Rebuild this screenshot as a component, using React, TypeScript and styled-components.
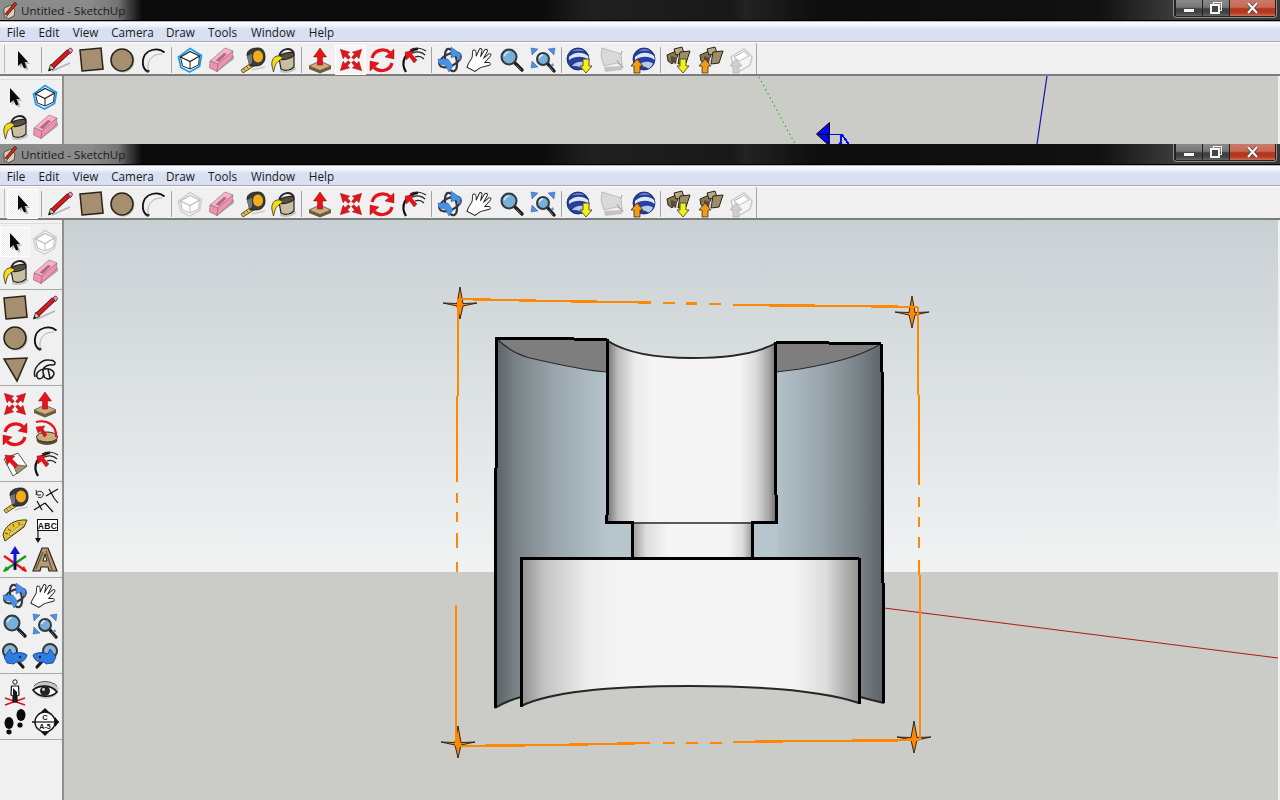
import React from "react";
import styled, { createGlobalStyle } from "styled-components";

const Global = createGlobalStyle`
  html, body { margin: 0; padding: 0; background: #f0f0f0; overflow: hidden; }
  body { font-family: "Open Sans", "Noto Sans", "Liberation Sans", sans-serif; }
`;

const Page = styled.div`
  width: 1280px;
  height: 800px;
  display: flex;
  flex-direction: column;
  overflow: hidden;
`;
const Win = styled.div<{ $h: number }>`
  height: ${(p) => p.$h}px;
  display: flex;
  flex-direction: column;
  overflow: hidden;
  flex: none;
`;
const TitleBar = styled.div`
  height: 20px;
  flex: none;
  display: flex;
  align-items: flex-start;
  border-bottom: 1px solid #000;
  box-shadow: 0 1px 0 #b8b8b8;
  margin-bottom: 1px;
  background:
    linear-gradient(90deg, #8c8c8c 0, #8a8a8a 90px, #747474 118px, #3a3a3a 130px, rgba(20,20,20,0) 142px),
    linear-gradient(90deg, #0b0b0b 0, #0b0b0b 540px, #202020 590px, #181818 730px, #222 745px, #0d0d0d 820px, #111 1100px, #3a3a3a 1172px, #3a3a3a 1280px);
`;
const AppGlyph = styled.svg`
  width: 16px;
  height: 18px;
  margin: 2px 3px 0 2px;
  flex: none;
`;
const TitleText = styled.span`
  font-size: 11.6px;
  line-height: 21px;
  color: #1c1c1c;
  white-space: nowrap;
  flex: 1;
`;
const WinButtons = styled.div`
  display: flex;
  width: 104px;
  height: 18px;
  margin-right: 3px;
  padding: 0 1px 1px 2px;
  box-sizing: border-box;
  gap: 1px;
  border: 1px solid #8d8d8d;
  border-top: 0;
  border-radius: 0 0 4px 4px;
  background: #222;
`;
const WinBtn = styled.div<{ $w: number; $close?: boolean }>`
  width: ${(p) => p.$w}px;
  height: 100%;
  display: flex;
  align-items: center;
  justify-content: center;
  background: ${(p) =>
    p.$close
      ? "linear-gradient(#c87a68 0, #c9695a 45%, #b83417 55%, #b33a20 80%, #d0705a 100%)"
      : "linear-gradient(#8a8a8a 0, #777 45%, #3f3f3f 55%, #444 80%, #666 100%)"};
`;
const MinGlyph = styled.div`
  width: 10px;
  height: 3px;
  margin-top: 4px;
  background: #f4f4f4;
  box-shadow: 0 0 1px #222;
`;
const MenuBar = styled.div`
  height: 20px;
  flex: none;
  box-sizing: border-box;
  display: flex;
  padding-right: 2px;
  border-bottom: 1px solid #a4a8b2;
  background: linear-gradient(#fafbfd 0, #eff2f8 4px, #d9e0f2 7px, #d9e0f2 100%);
`;
const MenuItem = styled.span<{ $w: number }>`
  width: ${(p) => p.$w}px;
  font-size: 11.7px;
  line-height: 20px;
  color: #1a1a1a;
  text-align: center;
  flex: none;
`;
const Toolbar = styled.div`
  height: 32px;
  flex: none;
  display: flex;
  align-items: flex-start;
  box-sizing: border-box;
  padding-top: 2px;
  background: #f0f0f0;
  border-top: 1px solid #fff;
  position: relative;
`;
const Grip = styled.div`
  width: 5px;
  box-sizing: border-box;
  height: 28px;
  margin: 0 2px 0 0;
  border-right: 1px solid #bcbcbc;
  flex: none;
`;
const ToolBtn = styled.div<{ $active?: boolean }>`
  width: 31px;
  height: 30px;
  margin-top: 0;
  display: flex;
  align-items: center;
  justify-content: center;
  box-sizing: border-box;
  flex: none;
  ${(p) =>
    p.$active
      ? `border: 1px solid #fff;
         background: repeating-conic-gradient(#ffffff 0 25%, #ececec 0 50%) 0 0 / 2px 2px;`
      : ""}
`;
const Sep = styled.div`
  width: 6px;
  flex: none;
  height: 30px;
  display: flex;
  justify-content: center;
  &::after {
    content: "";
    width: 1px;
    height: 26px;
    margin-top: 2px;
    background: #a2a2a2;
  }
`;
const EndRule = styled.div`
  width: 1px;
  height: 31px;
  margin: -2px 0 0 0;
  background: #a2a2a2;
  flex: none;
`;
const Content = styled.div`
  flex: 1;
  min-height: 0;
  display: flex;
  border-top: 2px solid #7c7c7c;
  background: #f0f0f0;
`;
const Palette = styled.div<{ $pad: number }>`
  flex: none;
  box-sizing: border-box;
  border-right: 2px solid #8f8f8f;
  width: 64px;
  padding-top: ${(p) => p.$pad}px;
  position: relative;
  &::before {
    content: "";
    position: absolute;
    left: 0;
    right: 0;
    top: 2px;
    height: 2px;
    background: linear-gradient(#fff, #d0d0d0);
  }
`;
const PalGrid = styled.div`
  display: grid;
  grid-template-columns: 30px 30px;
  grid-auto-rows: 30px;
`;
const PalBtn = styled.div<{ $active?: boolean }>`
  display: flex;
  align-items: center;
  justify-content: center;
  box-sizing: border-box;
  ${(p) =>
    p.$active
      ? `border: 1px solid #fff;
         background: repeating-conic-gradient(#ffffff 0 25%, #ececec 0 50%) 0 0 / 2px 2px;`
      : ""}
`;
const PalSep = styled.div`
  height: 6px;
  display: flex;
  align-items: flex-start;
  padding-top: 2px;
  box-sizing: border-box;
  &::after {
    content: "";
    width: 100%;
    height: 1px;
    background: #a8a8a8;
  }
`;
const Canvas = styled.div`
  flex: 1;
  min-width: 0;
  margin-right: 2px;
  & > svg {
    display: block;
    width: 100%;
    height: 100%;
  }
`;

const OL = "#2a2418";
const TAN = "#a68f70";
const RED = "#e5141c";
const BLUE = "#4a90e6";

const Mag = ({ cx = 11, cy = 11, r = 7.5, ex = 24, ey = 24 }: { cx?: number; cy?: number; r?: number; ex?: number; ey?: number }) => (
  <>
    <line x1={cx + r * 0.7} y1={cy + r * 0.7} x2={ex} y2={ey} stroke="#1c1c1c" strokeWidth="3.4" strokeLinecap="round" />
    <line x1={cx + r * 0.7 + 2} y1={cy + r * 0.7 + 3} x2={ex - 1} y2={ey} stroke="#aaa" strokeWidth=".6" />
    <circle cx={cx} cy={cy} r={r} fill="#79aed6" stroke="#2e3a42" strokeWidth="2" />
    <path d={`M${cx - r * 0.6} ${cy - 1} A${r * 0.65} ${r * 0.65} 0 0 1 ${cx} ${cy - r * 0.65}`} stroke="#d6ecfa" strokeWidth="1.5" fill="none" />
  </>
);
const Globe = () => (
  <>
    <circle cx="12" cy="13" r="11" fill="#23409e" stroke="#14214f" strokeWidth=".8" />
    <path d="M3 11 C8 6 16 5 22 10 C22.6 11.4 22.8 12.6 22.6 14 C17 9.5 9 10 3 14 Z" fill="#dfe7f6" />
    <path d="M6 20 C10 15 17 15 21 17.5 C20 20 18.5 21.5 16.5 22.5 C13 20 9 20 6 20Z" fill="#b9c8ea" />
    <path d="M6 5 C10 2.5 15 2.5 18.5 5 C14 4.5 10 4.6 6 5Z" fill="#6f8fd8" />
  </>
);
const Boxes = () => (
  <>
    <path d="M2 9 L11 5 L13 10 L7 18 L3 15Z" fill="#8a7656" stroke="#2a2418" strokeWidth="1" />
    <path d="M9 3 L17 1 L19 7 L11 9Z" fill="#bba888" stroke="#2a2418" strokeWidth="1" />
    <path d="M15 6 L25 5 L21 17 L13 18Z" fill="#a08c6a" stroke="#2a2418" strokeWidth="1" />
    <path d="M6 10 L12 12 L11 18 L6 16Z" fill="#5b4c36" />
  </>
);
const Arrow = ({ x, up, fill }: { x: number; up?: boolean; fill: string }) => (
  <path
    d={
      up
        ? `M${x} 13 L${x + 6} 20 L${x + 3} 20 L${x + 3} 27 L${x - 3} 27 L${x - 3} 20 L${x - 6} 20Z`
        : `M${x} 27 L${x + 6} 20 L${x + 3} 20 L${x + 3} 13 L${x - 3} 13 L${x - 3} 20 L${x - 6} 20Z`
    }
    fill={fill}
    stroke="#333"
    strokeWidth=".8"
  />
);
const Box3 = ({ c, inner }: { c: string; inner: string }) => (
  <>
    <path d="M14 2.5 L25.5 9.5 L23.5 20.5 L13.5 26 L5 21.5 L2.5 11Z" fill="#fff" stroke={c} strokeWidth="1.8" />
    <path d="M4.5 11 L14 5.5 L23.5 10 L14 15.5Z" fill="#fff" stroke={inner} strokeWidth="1.2" />
    <path d="M14 15.5 L14 23 M4.5 11 L6.5 20 L14 23 L22.5 19 L23.5 10" fill="none" stroke={inner} strokeWidth="1" />
  </>
);
const Pal4 = ({ a = 45 }: { a?: number }) => (
  <g transform={`rotate(${a} 14 14)`}>
    <path d="M14 -1 L18.6 7.5 L15.6 7.2 L15.4 11.6 L12.6 11.6 L12.4 7.2 L9.4 7.5Z" fill={RED} stroke="#8a0a0a" strokeWidth=".5" />
  </g>
);
const Zoomer = ({ flip }: { flip?: boolean }) => (
  <g transform={flip ? "matrix(-1 0 0 1 28 0)" : undefined}>
    <line x1="13" y1="15" x2="22" y2="25" stroke="#1c1c1c" strokeWidth="3.2" strokeLinecap="round" />
    <circle cx="9" cy="9" r="7" fill="#8fb6d4" stroke="#2e3a42" strokeWidth="2" />
    <path d="M3 15 L9 7 L11 12 C16 10 22 10 26 13 C25 18 21 21 15 20 L13 22 L6 21Z" fill="#2f7de0" stroke="#123a80" strokeWidth=".8" />
    <circle cx="19" cy="15" r="1.2" fill="#123" />
  </g>
);

const ICONS: Record<string, React.ReactNode> = {
  select: (
    <>
      <path d="M11 7 L11 22 L14.5 19 L17 24.5 L19.5 23.5 L17.5 18 L21 18Z" fill="#bbb" />
      <path d="M9 5 L9 20 L12.5 17 L15 22.5 L17.5 21.5 L15.5 16 L19 16Z" fill="#0a0a0a" />
    </>
  ),
  pencil: (
    <>
      <path d="M6 25 L24 17" stroke="#b5b5b5" strokeWidth="1.5" />
      <path d="M6 21 L23 5" stroke="#222" strokeWidth="5" />
      <path d="M6 21 L23 5" stroke={RED} strokeWidth="3.4" />
      <path d="M2.5 25 L4.5 18.5 L8.5 22.5Z" fill="#d9c08a" stroke="#222" strokeWidth=".8" />
      <path d="M2.5 25 L3.4 22 L5.5 24Z" fill="#111" />
      <path d="M22 4 L24 2 C26 2 27 4 26 6 L24.5 7.5Z" fill="#f28ab0" stroke="#222" strokeWidth=".7" />
    </>
  ),
  rect: (
    <>
      <path d="M6 26 L27 24 L27 20 L6 22Z" fill="#c4c4c4" />
      <path d="M3 4 L24 2 L26 23 L5 25Z" fill={TAN} stroke={OL} strokeWidth="1.5" />
    </>
  ),
  circle: (
    <>
      <circle cx="15" cy="15" r="11.5" fill="#bdbdbd" />
      <circle cx="14" cy="14" r="11" fill={TAN} stroke={OL} strokeWidth="1.5" />
    </>
  ),
  arc: (
    <>
      <path d="M9 23 C8 13 14 8 23 8" stroke="#b0b0b0" strokeWidth="1" fill="none" />
      <path d="M9 26 C2 22 1 8 13 4 C18 2.5 22 3.5 25.5 6.5" stroke="#111" strokeWidth="1.8" fill="none" />
      <circle cx="9" cy="25" r="1.6" fill="#333" />
    </>
  ),
  comp: <Box3 c="#1c9cf0" inner="#222" />,
  compOff: <Box3 c="#d2d2d2" inner="#bcbcbc" />,
  eraser: (
    <>
      <path d="M10 26 L27 13 L27 9 L8 23Z" fill="#aaa" />
      <path d="M3 15 L18 2 L26 5 L11 18Z" fill="#fbb0c6" stroke="#777" strokeWidth=".6" />
      <path d="M3 15 L11 18 L10 25.5 L2.5 22Z" fill="#f48fae" stroke="#777" strokeWidth=".6" />
      <path d="M11 18 L26 5 L25 12 L10 25.5Z" fill="#f78db0" stroke="#777" strokeWidth=".6" />
      <path d="M8.5 14.5 L17 7 L20 8 L12 16Z" fill="#b06a82" />
    </>
  ),
  tape: (
    <>
      <path d="M3 24 L13 17 L16 20 L5 27Z" fill="#e9c33c" stroke="#333" strokeWidth=".8" />
      <path d="M5.5 22.5 L7 24.5 M8.5 20.5 L10 22.5 M11.5 18.5 L13 20.5" stroke="#333" strokeWidth=".7" />
      <path d="M9 9 C9 4 14 2 20 2 C25 2 27 6 27 11 C27 17 23 20 18 20 L12 20 Z" fill="#3a3a3a" stroke="#111" strokeWidth=".8" />
      <ellipse cx="20" cy="10.5" rx="5" ry="6" fill="#f3ad18" />
      <path d="M9 10 L14 8 L14 17 L11 19Z" fill="#777" />
      <path d="M14 24 L27 21" stroke="#ccc" strokeWidth="1.6" />
    </>
  ),
  paint: (
    <>
      <path d="M11 25 C16 27 23 26 27 22" stroke="#c4c4c4" strokeWidth="2" fill="none" />
      <path d="M10 11 C11 3 21 0 25 7" stroke="#222" strokeWidth="1.8" fill="none" />
      <path d="M10 12 L25 8 L25 21 C21 25 15 25 12 23Z" fill="#c9bea0" stroke="#222" strokeWidth="1.2" />
      <ellipse cx="17.5" cy="10" rx="7.8" ry="3" transform="rotate(-14 17.5 10)" fill="#55503f" stroke="#222" />
      <path d="M11 10 C5 9 2 14 3 20 L4.5 26 L6 20 C7 16 10 15 14 12Z" fill="#f5dc14" stroke="#333" strokeWidth=".8" />
    </>
  ),
  push: (
    <>
      <path d="M3 20 L14 15 L25 20 L14 24.5Z" fill="#c9ae80" stroke="#4c3d28" strokeWidth=".7" />
      <path d="M3 20 L3 23 L14 27.5 L25 23 L25 20 L14 24.5Z" fill="#6f5a3c" />
      <path d="M14 2 L20.5 11 L16.5 11 L16.5 19 L11.5 19 L11.5 11 L7.5 11Z" fill={RED} stroke="#8a0a0a" strokeWidth=".5" />
    </>
  ),
  move: (
    <>
      <Pal4 a={45} />
      <Pal4 a={135} />
      <Pal4 a={225} />
      <Pal4 a={315} />
    </>
  ),
  rotate: (
    <>
      <path d="M4 12 C6 4 16 1.5 22 6.5" stroke={RED} strokeWidth="3.2" fill="none" />
      <path d="M26 3 L26 13 L17 11Z" fill={RED} stroke="#8a0a0a" strokeWidth=".4" />
      <path d="M24 17 C22 25 12 27 6 21.5" stroke={RED} strokeWidth="3.2" fill="none" />
      <path d="M2 25 L2 15 L11 17Z" fill={RED} stroke="#8a0a0a" strokeWidth=".4" />
    </>
  ),
  offset: (
    <>
      <path d="M7 26 C1 16 6 5 19 3" stroke="#111" strokeWidth="2.2" fill="none" />
      <path d="M11 4 C16 1 23 2 27 5" stroke="#222" strokeWidth="1.2" fill="none" />
      <path d="M14 7 C18 5 23 6 26 9" stroke="#222" strokeWidth="1.2" fill="none" />
      <path d="M16 11 C19 10 22 10 25 13" stroke="#222" strokeWidth="1.2" fill="none" />
      <path d="M6 6 L15 5 L13 8.5 L18 14 L15 17 L10.5 11 L7 14Z" fill={RED} stroke="#8a0a0a" strokeWidth=".4" />
    </>
  ),
  orbit: (
    <>
      <ellipse cx="14" cy="14" rx="11.5" ry="6" transform="rotate(-25 14 14)" fill="none" stroke="#33393f" strokeWidth="2.2" />
      <ellipse cx="15" cy="14" rx="5.5" ry="11.5" transform="rotate(-15 15 14)" fill="none" stroke="#33393f" strokeWidth="2.2" />
      <path d="M15 1 L25 8 L24 15 L20 10 L15 12Z" fill={BLUE} stroke="#1d4a90" strokeWidth=".4" />
      <path d="M2 13 L12 13 L17 20 L13 26 L9 19 L3 18Z" fill={BLUE} stroke="#1d4a90" strokeWidth=".4" />
    </>
  ),
  hand: (
    <g transform="rotate(28 14 14)">
      <path d="M5 27 C4 22 5 19 5 16 L2.5 10 C2.5 8 5 7.5 6 9.5 L8 13 L7.5 5.5 C7.5 3.5 10 3.5 10.5 5.5 L12 11.5 L12.5 3.5 C13 1.5 15.5 1.5 15.5 3.5 L15.5 11.5 L18 5 C19 3.5 21 4 20.5 6 L18.5 14.5 L22 12.5 C24.5 12 25 14 23 15.5 L17 21 L14 27Z" fill="#fff" stroke="#222" strokeWidth=".9" />
    </g>
  ),
  zoom: <Mag />,
  zoomExt: (
    <>
      <Mag cx={14} cy={13} r={6} ex={25} ey={25} />
      <path d="M2 2 L9 3 L3 9Z M26 2 L19 3 L25 9Z M2 22 L3 15 L9 21Z" fill={BLUE} stroke="#1d4a90" strokeWidth=".4" />
      <path d="M24 17 L25 20 L21 20Z" fill={BLUE} />
    </>
  ),
  geoDown: (
    <>
      <Globe />
      <Arrow x={20} fill="#f5f010" />
    </>
  ),
  geoToggle: (
    <>
      <path d="M5 2 L24 8 L25 19 L19 17 L7 20 L4 10Z" fill="#d9d9d9" stroke="#bdbdbd" strokeWidth="1" />
      <path d="M7 21 L25 20 L25 24 L8 26Z" fill="#c4c4c4" />
      <path d="M24 8 L25 5 M25 19 L26 22 M20 14 L24 20" stroke="#999" strokeWidth="1" />
    </>
  ),
  geoUp: (
    <>
      <g transform="translate(4 0)">
        <Globe />
      </g>
      <Arrow x={9} up fill="#f79a10" />
    </>
  ),
  wareDown: (
    <>
      <Boxes />
      <Arrow x={18} fill="#f5f010" />
    </>
  ),
  wareUp: (
    <>
      <g transform="translate(2 0)">
        <Boxes />
      </g>
      <Arrow x={9} up fill="#f79a10" />
    </>
  ),
  share: (
    <>
      <path d="M4 11 L17 3 L25 11 L23 19 L13 25 L6 20Z" fill="#f4f4f4" stroke="#c9c9c9" strokeWidth="1.4" />
      <path d="M7 11 L17 5.5 L22 10 L12 15Z" fill="#fff" stroke="#bbb" />
      <path d="M9 13 L15 20 L12 20 L12 27 L6 27 L6 20 L3 20Z" fill="#cfcfcf" stroke="#aaa" strokeWidth=".6" />
    </>
  ),
  poly: (
    <>
      <path d="M3 5 L26 4 L16 27Z" fill={TAN} stroke={OL} strokeWidth="1.5" />
    </>
  ),
  free: (
    <path d="M4 23 C1 15 10 5 18 6 C24 6 26 10 22 11 C16 10 11 14 12 18 C14 24 8 27 6 23 C4 19 9 15 14 15 C20 14 25 18 22 22 C19 27 12 25 13 20 M17 15 L19 24" stroke="#1a1a1a" strokeWidth="1.5" fill="none" />
  ),
  scale: (
    <>
      <path d="M3 9 L17 3 L26 16 L12 26Z" fill="#fafafa" stroke="#555" strokeWidth="1" />
      <path d="M17 15 L26 16 L16 24 L13 17Z" fill={TAN} stroke="#4c3d28" strokeWidth=".6" />
      <path d="M4 5 L14 6 L11 9 L17 15 L14 18 L8.5 12 L6 15Z" fill={RED} stroke="#8a0a0a" strokeWidth=".4" />
    </>
  ),
  follow: (
    <>
      <ellipse cx="16" cy="20" rx="10.5" ry="5" fill="#5c4c33" />
      <ellipse cx="16" cy="17" rx="10.5" ry="5" fill="#c9ae80" stroke="#3c2f1c" strokeWidth="1" />
      <path d="M5 2 C17 -1 26 6 25 17" stroke={RED} strokeWidth="2.2" fill="none" />
      <path d="M5 7 L14 6 L12 9 L16 15 L13 17 L10 11 L7 13Z" fill={RED} stroke="#8a0a0a" strokeWidth=".4" />
    </>
  ),
  dims: (
    <>
      <path d="M15 10 L27 3 M18 3 L23 12 M3 24 L14 17 M6 15 L11 24 M14 17 L22 26 M23 12 L27 17" stroke="#111" strokeWidth="1.2" fill="none" />
      <path d="M5 9 C5 5 10 4 12 7 C13 10 10 13 7 11 M5 4 L6 9 L10 9" stroke="#222" strokeWidth="1" fill="none" />
    </>
  ),
  proto: (
    <>
      <path d="M2 19 C4 9 14 3 26 4 L23 11 L4 25Z" fill="#e8c233" stroke="#3c3418" strokeWidth="1" />
      <path d="M8 18 L21 8 L22 10 L9 20Z" fill="#f5e08a" stroke="#5c5020" strokeWidth=".5" />
      <path d="M4 17 L7 18 M7 13 L10 15 M12 8 L13 11 M18 6 L18 9" stroke="#3c3418" strokeWidth=".8" />
    </>
  ),
  text: (
    <>
      <rect x="6.5" y="3.5" width="20" height="11" fill="#fff" stroke="#111" />
      <text x="16.5" y="12.5" textAnchor="middle" fontFamily="Liberation Sans, sans-serif" fontSize="8.5" fontWeight="700" fill="#111" letterSpacing=".3">ABC</text>
      <path d="M7 14 L7 24" stroke="#111" strokeWidth="1.2" />
      <path d="M4 22 L10 22 L7 27Z" fill="#111" />
    </>
  ),
  axes: (
    <>
      <path d="M3 25 L25 10" stroke="#12a012" strokeWidth="2.4" />
      <path d="M3 10 L25 25" stroke={RED} strokeWidth="2.4" />
      <path d="M14 24 L14 6" stroke="#1414d8" strokeWidth="3" />
      <path d="M14 0 L19 8 L9 8Z" fill="#1414d8" />
      <path d="M2 26 L8 24 L5 20Z" fill="#12a012" />
      <path d="M26 26 L20 24 L23 20Z" fill={RED} />
      <path d="M14 17 L14 23" stroke="#111" strokeWidth="2" />
    </>
  ),
  text3d: (
    <>
      <path d="M2 25 L9 25 L10 21 L17 21 L18 25 L26 25 L17 2 L11 2Z" fill="#b59c78" stroke="#2a2418" strokeWidth="1.2" />
      <path d="M12 15 L14 8 L16 15Z" fill="#ececec" stroke="#2a2418" />
      <path d="M5 23 L12 6 M21 24 L15 5" stroke="#6d5a3c" strokeWidth="1.4" />
    </>
  ),
  zprev: <Zoomer />,
  znext: <Zoomer flip />,
  person: (
    <>
      <path d="M4 20 L24 27 M4 27 L24 20" stroke="#e01010" strokeWidth="1.4" />
      <circle cx="14" cy="4" r="2.2" fill="#fff" stroke="#111" />
      <path d="M10.5 8 L17.5 8 L18 17 L16 18 L16 24 L12 24 L12 18 L10 17Z" fill="#fff" stroke="#111" strokeWidth="1.2" />
      <path d="M12 10 L12 24 L16 24 L16 14Z" fill="#1a1a1a" />
    </>
  ),
  eye: (
    <>
      <path d="M1 12 C6 2 21 1 28 10 L26 16 C22 22 10 22 5 17Z" fill="#c7c7c7" />
      <path d="M2 12 C8 7 20 6 26 14 C20 20 8 20 2 12Z" fill="#f7f7f7" stroke="#111" strokeWidth="1.6" />
      <circle cx="14" cy="13" r="5" fill="#222" />
      <circle cx="12.5" cy="11.5" r="1.4" fill="#ddd" />
      <path d="M3 8 C8 2 20 2 26 8" stroke="#555" fill="none" />
    </>
  ),
  foot: (
    <>
      <ellipse cx="8" cy="15" rx="4.5" ry="6" fill="#0a0a0a" />
      <ellipse cx="8" cy="24" rx="2.6" ry="2.4" fill="#0a0a0a" />
      <ellipse cx="20" cy="7" rx="4.5" ry="6" fill="#0a0a0a" />
      <ellipse cx="19" cy="17" rx="2.6" ry="2.6" fill="#0a0a0a" />
    </>
  ),
  section: (
    <>
      <path d="M14 0 L18 4 L10 4Z M14 28 L18 24 L10 24Z" fill="#111" />
      <path d="M1 14 L4 14 M24 14 L28 14" stroke="#111" strokeWidth="1.4" />
      <path d="M24 9 L28 14 L24 19Z" fill="#111" />
      <circle cx="14" cy="14" r="10" fill="#fff" stroke="#111" strokeWidth="1.4" />
      <line x1="4" y1="14" x2="24" y2="14" stroke="#111" strokeWidth="1.2" />
      <text x="14" y="12" textAnchor="middle" fontFamily="Liberation Sans, sans-serif" fontSize="7.5" fontWeight="700" fill="#111">C</text>
      <text x="14" y="21" textAnchor="middle" fontFamily="Liberation Sans, sans-serif" fontSize="7" fontWeight="700" fill="#111">A-5</text>
    </>
  ),
};

const IconSvg = styled.svg`
  width: 28px;
  height: 28px;
  display: block;
  flex: none;
  overflow: visible;
`;
const Icon = ({ name }: { name: string }) => <IconSvg viewBox="0 0 28 28">{ICONS[name]}</IconSvg>;

const MENUS: [string, number][] = [["File", 32], ["Edit", 34], ["View", 39], ["Camera", 55], ["Draw", 41], ["Tools", 43], ["Window", 58], ["Help", 39]];

const Menu = () => (
  <MenuBar>
    {MENUS.map(([m, w]) => (
      <MenuItem key={m} $w={w}>{m}</MenuItem>
    ))}
  </MenuBar>
);

const Title = () => (
  <TitleBar>
    <AppGlyph viewBox="0 0 16 18">
      <path d="M2 6 L9 3 L13 8 L12 14 L6 17 L2 13Z" fill="#d9d2c2" stroke="#5c5040" />
      <path d="M4 13 L14 1" stroke="#222" strokeWidth="3.4" />
      <path d="M4 13 L14 1" stroke="#d8261c" strokeWidth="2" />
      <path d="M2 16 L3 12 L5.5 14Z" fill="#e6c9a0" stroke="#333" strokeWidth=".5" />
    </AppGlyph>
    <TitleText>Untitled - SketchUp</TitleText>
    <WinButtons>
      <WinBtn $w={27}><MinGlyph /></WinBtn>
      <WinBtn $w={26}>
        <svg width="12" height="12" viewBox="0 0 12 12">
          <rect x="3.5" y=".5" width="8" height="8" fill="none" stroke="#eee" />
          <rect x="1" y="3" width="8" height="8" fill="#444" stroke="#f4f4f4" strokeWidth="2" />
        </svg>
      </WinBtn>
      <WinBtn $w={46} $close>
        <svg width="13" height="12" viewBox="0 0 13 12">
          <path d="M2 1 L11 11 M11 1 L2 11" stroke="#444" strokeWidth="3.6" />
          <path d="M2 1 L11 11 M11 1 L2 11" stroke="#f4f4f4" strokeWidth="2.2" />
        </svg>
      </WinBtn>
    </WinButtons>
  </TitleBar>
);

type Slot = { i: string; active?: boolean } | "sep";
const topTools = (comp: string, moveActive?: boolean): Slot[] => [
  { i: "select", active: !moveActive },
  "sep",
  { i: "pencil" }, { i: "rect" }, { i: "circle" }, { i: "arc" },
  "sep",
  { i: comp }, { i: "eraser" }, { i: "tape" }, { i: "paint" },
  "sep",
  { i: "push" }, { i: "move", active: moveActive }, { i: "rotate" }, { i: "offset" },
  "sep",
  { i: "orbit" }, { i: "hand" }, { i: "zoom" }, { i: "zoomExt" },
  "sep",
  { i: "geoDown" }, { i: "geoToggle" }, { i: "geoUp" },
  "sep",
  { i: "wareDown" }, { i: "wareUp" }, { i: "share" },
];

const Tools = ({ slots }: { slots: Slot[] }) => (
  <Toolbar>
    <Grip />
    {slots.map((s, idx) =>
      s === "sep" ? (
        <Sep key={idx} />
      ) : (
        <ToolBtn key={idx} $active={s.active}><Icon name={s.i} /></ToolBtn>
      )
    )}
    <EndRule />
  </Toolbar>
);

const PAL_GROUPS: string[][] = [
  ["select", "compOff", "paint", "eraser"],
  ["rect", "pencil", "circle", "arc", "poly", "free"],
  ["move", "push", "rotate", "follow", "scale", "offset"],
  ["tape", "dims", "proto", "text", "axes", "text3d"],
  ["orbit", "hand", "zoom", "zoomExt", "zprev", "znext"],
  ["person", "eye", "foot", "section"],
];

const Star = ({ x, y }: { x: number; y: number }) => (
  <g>
    <path
      d={`M${x - 17} ${y} L${x - 3} ${y + 0.5} L${x} ${y - 16} L${x + 3} ${y + 0.5} L${x + 17} ${y} L${x + 3} ${y + 3} L${x} ${y + 16} L${x - 3} ${y + 3}Z`}
      fill="#ff8800"
      stroke="#1a1a1a"
      strokeWidth=".9"
    />
  </g>
);

const O = "#ff8800";
const orange = [
  "M459 299 L550 301 L651 302.5", "M663 303 H675", "M686 303.5 H697", "M709 304 H721", "M733 305 L850 306 L918 307",
  "M458 299 V396", "M457 396 V482", "M457 493 V503", "M457 512 V522", "M457 533 V548", "M457 562 V572", "M456 605 V746",
  "M918 307 V395", "M919 395 V485", "M919 497 V507", "M919 517 V527", "M919 537 V548", "M919 560 V575", "M920 575 V740",
  "M456 746 L555 745 L650 743", "M663 743 H675", "M686 743 H698", "M710 743 H722", "M733 742 L806 741 L884 740.5 L920 740",
];

const Scene = () => (
  <svg viewBox="64 220 1214 580" preserveAspectRatio="none">
    <defs>
      <linearGradient id="sky" x1="0" y1="0" x2="0" y2="1">
        <stop offset="0" stopColor="#c9d0d3" />
        <stop offset="1" stopColor="#f1f3f3" />
      </linearGradient>
      <linearGradient id="wall" gradientUnits="userSpaceOnUse" x1="496" y1="0" x2="883" y2="0">
        <stop offset="0" stopColor="#5c6367" />
        <stop offset=".05" stopColor="#788186" />
        <stop offset=".15" stopColor="#99a5ab" />
        <stop offset=".29" stopColor="#b7c5cd" />
        <stop offset=".71" stopColor="#b7c5cd" />
        <stop offset=".85" stopColor="#97a3a9" />
        <stop offset=".95" stopColor="#747d82" />
        <stop offset="1" stopColor="#5c6367" />
      </linearGradient>
      <linearGradient id="upper" gradientUnits="userSpaceOnUse" x1="608" y1="0" x2="776" y2="0">
        <stop offset="0" stopColor="#777" />
        <stop offset=".06" stopColor="#bdbdbd" />
        <stop offset=".16" stopColor="#ebebeb" />
        <stop offset=".28" stopColor="#f5f5f5" />
        <stop offset=".78" stopColor="#f5f5f5" />
        <stop offset=".88" stopColor="#dcdcdc" />
        <stop offset=".96" stopColor="#a4a4a4" />
        <stop offset="1" stopColor="#707070" />
      </linearGradient>
      <linearGradient id="neck" gradientUnits="userSpaceOnUse" x1="632" y1="0" x2="752" y2="0">
        <stop offset="0" stopColor="#999" />
        <stop offset=".12" stopColor="#dedede" />
        <stop offset=".3" stopColor="#f5f5f5" />
        <stop offset=".8" stopColor="#f5f5f5" />
        <stop offset=".92" stopColor="#ddd" />
        <stop offset="1" stopColor="#999" />
      </linearGradient>
      <linearGradient id="lower" gradientUnits="userSpaceOnUse" x1="521" y1="0" x2="860" y2="0">
        <stop offset="0" stopColor="#8f8f8f" />
        <stop offset=".07" stopColor="#c4c4c4" />
        <stop offset=".2" stopColor="#eeeeee" />
        <stop offset=".3" stopColor="#f5f5f5" />
        <stop offset=".8" stopColor="#f5f5f5" />
        <stop offset=".9" stopColor="#dcdcdc" />
        <stop offset="1" stopColor="#8f8f8f" />
      </linearGradient>
    </defs>
    <rect x="64" y="220" width="1214" height="352" fill="url(#sky)" />
    <rect x="64" y="572" width="1214" height="228" fill="#cbcbc7" />
    <path d="M884 608 L1278 658" stroke="#b01818" strokeWidth="1.2" fill="none" />

    <path d="M496 337 L608 339 V560 H521 V697 C510 700 503 703 495 708Z" fill="url(#wall)" />
    <path d="M776 343 L882 344 L884 703 C875 701 868 699 859 696 V558 H776Z" fill="url(#wall)" />
    <rect x="607" y="510" width="170" height="50" fill="#b7c5cd" />
    <path d="M496 337 L607 339 V372 C590 371 560 365 530 358 C515 354 505 347 496 337Z" fill="#7e7e7e" />
    <path d="M776 343 L881 344 C862 355 840 362 800 369 L776 372Z" fill="#7e7e7e" />
    <path d="M496 338 C505 347 515 354 530 358 C560 365 590 371 607 372" stroke="#2a2a2a" strokeWidth="1.2" fill="none" />
    <path d="M881 344 C862 355 840 362 800 369 L776 372" stroke="#2a2a2a" strokeWidth="1.2" fill="none" />

    <path d="M608 341 C625 352 650 358 692 358 C735 358 760 352 776 343 V522 H607Z" fill="url(#upper)" />
    <path d="M608 341 C625 352 650 358 692 358 C735 358 760 352 776 343" stroke="#262626" strokeWidth="2" fill="none" />
    <rect x="632" y="522" width="120" height="36" fill="url(#neck)" />
    <path d="M521 558 H859 V703 C830 693 780 686 690 686 C610 686 550 692 521 706Z" fill="url(#lower)" />

    <path d="M521 706 C550 692 610 686 690 686 C780 686 830 693 859 703" stroke="#262626" strokeWidth="2" fill="none" />
    <path d="M495 708 C503 703 510 700 521 697" stroke="#262626" strokeWidth="2" fill="none" />
    <path d="M860 697 C868 699 875 701 884 703" stroke="#262626" strokeWidth="2" fill="none" />
    <path d="M607 523 H776" stroke="#262626" strokeWidth="1.6" fill="none" />

    <g shapeRendering="crispEdges" fill="none" stroke="#000" strokeWidth="3">
      <path d="M496.5 337 V468 M495.5 468 V708" />
      <path d="M495 338 L540 338 L607 340" />
      <path d="M607 339 V515 M606 515 V522 H632 V558" />
      <path d="M776 342 L881 344" />
      <path d="M775 342 V495 M776 495 V522 H752 V558" />
      <path d="M881.5 344 V372 M882.5 372 V583 M883.5 583 V703" />
      <path d="M520 558 H859" />
      <path d="M521 558 V707" />
      <path d="M859 558 V704" />
    </g>

    <Star x={460} y={303} />
    <Star x={912} y={312} />
    <Star x={458} y={742} />
    <Star x={914} y={737} />
    <g fill="none" stroke={O} strokeWidth="2.4" shapeRendering="crispEdges">
      {orange.map((d) => <path key={d} d={d} />)}
    </g>
  </svg>
);

const TopScene = () => (
  <svg viewBox="64 76 1214 68" preserveAspectRatio="none">
    <rect x="64" y="76" width="1214" height="68" fill="#cbcbc7" />
    <path d="M759 77 L795 144" stroke="#10c010" strokeWidth="1.2" strokeDasharray="1.4 3.2" fill="none" />
    <path d="M1047 76 L1037 144" stroke="#1414b0" strokeWidth="1.2" fill="none" />
    <path d="M816.5 134 L829.5 122.5 V146 Z" fill="#0808f0" stroke="#000" strokeWidth="1" />
    <path d="M817 134.5 H842 L850 146 M841 135 V146 M829 135 V146" stroke="#0808f0" strokeWidth="1.8" fill="none" shapeRendering="crispEdges" />
    <path d="M818 134.5 H830 M828.5 135 V145" stroke="#000" strokeWidth="1" shapeRendering="crispEdges" />
    <path d="M837 146 L841 140 L843 146Z" fill="#0808f0" />
  </svg>
);

const PaletteBlock = ({ groups, pad }: { groups: string[][]; pad: number }) => (
  <Palette $pad={pad}>
    {groups.map((g, gi) => (
      <React.Fragment key={gi}>
        <PalGrid>
          {g.map((n, i) => (
            <PalBtn key={n + i} $active={gi === 0 && i === 0 && pad === 7}><Icon name={n} /></PalBtn>
          ))}
        </PalGrid>
        <PalSep />
      </React.Fragment>
    ))}
  </Palette>
);

export default function App() {
  return (
    <Page>
      <Global />
      <Win $h={144}>
        <Title />
        <Menu />
        <Tools slots={topTools("comp", true)} />
        <Content>
          <PaletteBlock groups={[["select", "comp", "paint", "eraser"]]} pad={6} />
          <Canvas><TopScene /></Canvas>
        </Content>
      </Win>
      <Win $h={656}>
        <Title />
        <Menu />
        <Tools slots={topTools("compOff", false)} />
        <Content>
          <PaletteBlock groups={PAL_GROUPS} pad={7} />
          <Canvas><Scene /></Canvas>
        </Content>
      </Win>
    </Page>
  );
}
